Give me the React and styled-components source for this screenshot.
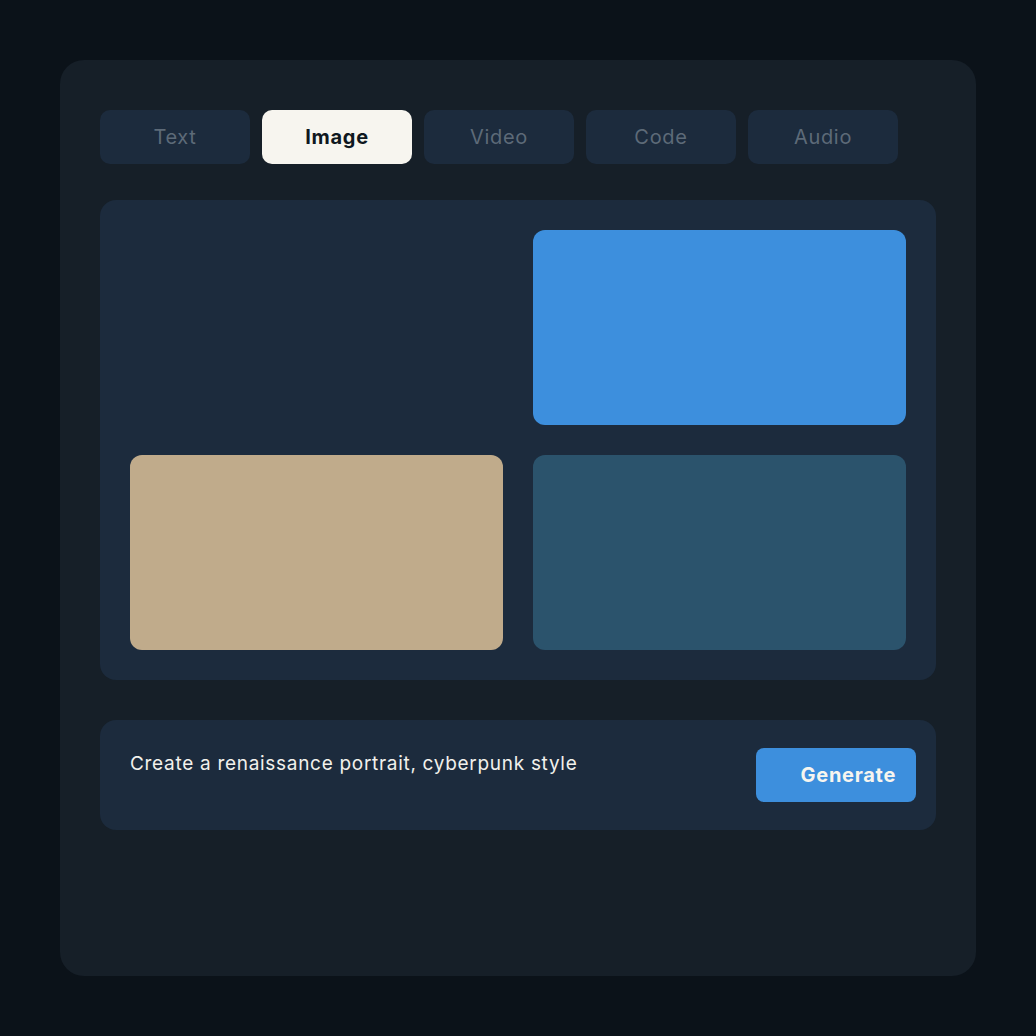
import styled, { createGlobalStyle } from "styled-components";

const GlobalStyle = createGlobalStyle`
  html, body {
    margin: 0;
    background: #0b1219;
    font-family: Inter, "Liberation Sans", sans-serif;
    letter-spacing: 0.7px;
  }
`;

const tabs = ["Text", "Image", "Video", "Code", "Audio"];
const tiles = ["transparent", "#3d8fdd", "#c0ab8b", "#2b536c"];

function App() {
  return (
    <>
      <GlobalStyle />
      <Page>
        <Card>
          <TabRow>
            {tabs.map((t) => (
              <Tab key={t} active={t === "Image"}>
                {t}
              </Tab>
            ))}
          </TabRow>

          <Gallery>
            {tiles.map((c, i) => (
              <Tile key={i} color={c} />
            ))}
          </Gallery>

          <PromptBar>
            <PromptText>Create a renaissance portrait, cyberpunk style</PromptText>
            <GenerateButton>Generate</GenerateButton>
          </PromptBar>
        </Card>
      </Page>
    </>
  );
}

export default App;

const Page = styled.div`
  padding: 60px;
  min-height: 1036px;
  box-sizing: border-box;
`;

const Card = styled.div`
  width: 916px;
  height: 916px;
  box-sizing: border-box;
  background: #161f28;
  border-radius: 24px;
  padding: 50px 40px 40px;
  display: flex;
  flex-direction: column;
`;

const TabRow = styled.div`
  display: flex;
  gap: 12px;
`;

const Tab = styled.div`
  width: 150px;
  height: 54px;
  border-radius: 10px;
  display: flex;
  align-items: center;
  justify-content: center;
  font-size: 20px;
  font-weight: ${(p) => (p.active ? 700 : 400)};
  color: ${(p) => (p.active ? "#0f1720" : "#5d6a78")};
  background: ${(p) => (p.active ? "#f7f5ef" : "#1c2b3d")};
`;

const Gallery = styled.div`
  margin-top: 36px;
  background: #1c2b3d;
  border-radius: 16px;
  padding: 30px;
  display: grid;
  grid-template-columns: 1fr 1fr;
  grid-auto-rows: 195px;
  gap: 30px;
`;

const Tile = styled.div`
  background: ${(p) => p.color};
  border-radius: 12px;
`;

const PromptBar = styled.div`
  margin-top: 40px;
  height: 110px;
  box-sizing: border-box;
  background: #1c2b3d;
  border-radius: 16px;
  padding: 0 20px 0 30px;
  display: flex;
  align-items: center;
  justify-content: space-between;
`;

const PromptText = styled.div`
  align-self: flex-start;
  margin-top: 32px;
  font-size: 19px;
  line-height: 24px;
  color: #f2f1ec;
`;

const GenerateButton = styled.button`
  width: 160px;
  height: 54px;
  border: none;
  border-radius: 8px;
  background: #3d8fdd;
  color: #f7f5ef;
  font-family: inherit;
  letter-spacing: inherit;
  font-size: 20px;
  font-weight: 700;
  display: flex;
  align-items: center;
  justify-content: flex-end;
  padding: 0 20px 0 0;
`;
